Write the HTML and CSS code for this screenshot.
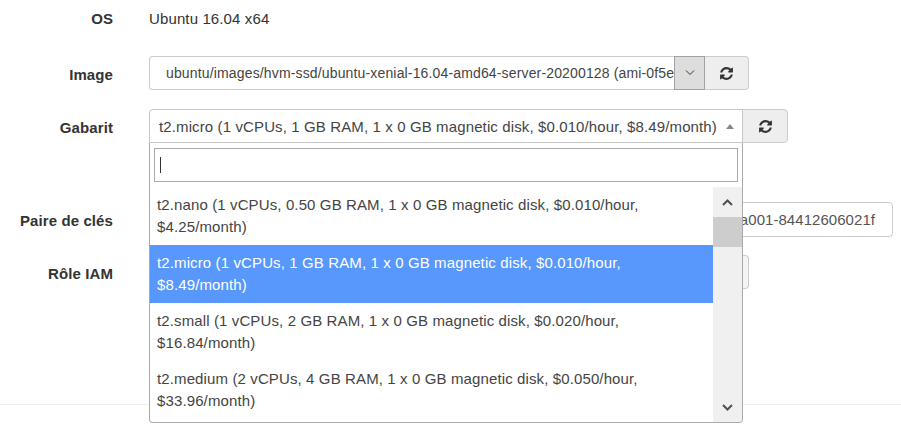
FILE: index.html
```html
<!DOCTYPE html>
<html lang="fr">
<head>
<meta charset="utf-8">
<title>Instance</title>
<link rel="stylesheet" href="styles.css">
</head>
<body>
<form class="form">
  <div class="row row-os">
    <div class="label">OS</div>
    <div class="static">Ubuntu 16.04 x64</div>
  </div>

  <div class="row row-image">
    <label class="label">Image</label>
    <div class="group">
      <div class="native">
        <span class="native-text">ubuntu/images/hvm-ssd/ubuntu-xenial-16.04-amd64-server-20200128 (ami-0f5ea0bd1cbbdb4b7)</span>
        <span class="native-arrow"><svg width="10" height="6" viewBox="0 0 10 6"><path d="M1 .5l4 4 4-4" fill="none" stroke="#333" stroke-width="1"/></svg></span>
      </div>
      <button type="button" class="addon"><svg class="refresh" viewBox="0 0 1792 1792"><path d="M1639 1056q0 5-1 7-64 268-268 434.5t-478 166.5q-146 0-282.5-55t-243.5-157l-129 129q-19 19-45 19t-45-19-19-45v-448q0-26 19-45t45-19h448q26 0 45 19t19 45-19 45l-137 137q71 66 161 102t187 36q134 0 250-65t186-179q11-17 53-117 8-23 30-23h192q13 0 22.5 9.5t9.5 22.5zm25-800v448q0 26-19 45t-45 19h-448q-26 0-45-19t-19-45 19-45l138-138q-148-137-349-137-134 0-250 65t-186 179q-11 17-53 117-8 23-30 23h-199q-13 0-22.5-9.5t-9.5-22.5v-7q65-268 270-434.5t480-166.5q146 0 284 55.5t245 156.5l130-129q19-19 45-19t45 19 19 45z"/></svg></button>
    </div>
  </div>

  <div class="row row-gabarit">
    <label class="label">Gabarit</label>
    <div class="group">
      <div class="s2">
        <div class="s2-selection">
          <span class="s2-text">t2.micro (1 vCPUs, 1 GB RAM, 1 x 0 GB magnetic disk, $0.010/hour, $8.49/month)</span>
          <b class="s2-arrow"></b>
        </div>
        <div class="s2-dropdown">
          <div class="s2-search"><div class="s2-input"><span class="caret"></span></div></div>
          <div class="s2-results">
            <ul class="s2-list">
              <li class="s2-option">t2.nano (1 vCPUs, 0.50 GB RAM, 1 x 0 GB magnetic disk, $0.010/hour, $4.25/month)</li>
              <li class="s2-option is-highlighted">t2.micro (1 vCPUs, 1 GB RAM, 1 x 0 GB magnetic disk, $0.010/hour, $8.49/month)</li>
              <li class="s2-option">t2.small (1 vCPUs, 2 GB RAM, 1 x 0 GB magnetic disk, $0.020/hour, $16.84/month)</li>
              <li class="s2-option">t2.medium (2 vCPUs, 4 GB RAM, 1 x 0 GB magnetic disk, $0.050/hour, $33.96/month)</li>
            </ul>
            <div class="scrollbar">
              <span class="sb-btn"><svg width="11" height="7" viewBox="0 0 11 7"><path d="M1 6l4.5-4.5L10 6" fill="none" stroke="#505050" stroke-width="2"/></svg></span>
              <span class="sb-thumb"></span>
              <span class="sb-track"></span>
              <span class="sb-btn"><svg width="11" height="7" viewBox="0 0 11 7"><path d="M1 1l4.5 4.5L10 1" fill="none" stroke="#505050" stroke-width="2"/></svg></span>
            </div>
          </div>
        </div>
      </div>
      <button type="button" class="addon addon-s2"><svg class="refresh" viewBox="0 0 1792 1792"><path d="M1639 1056q0 5-1 7-64 268-268 434.5t-478 166.5q-146 0-282.5-55t-243.5-157l-129 129q-19 19-45 19t-45-19-19-45v-448q0-26 19-45t45-19h448q26 0 45 19t19 45-19 45l-137 137q71 66 161 102t187 36q134 0 250-65t186-179q11-17 53-117 8-23 30-23h192q13 0 22.5 9.5t9.5 22.5zm25-800v448q0 26-19 45t-45 19h-448q-26 0-45-19t-19-45 19-45l138-138q-148-137-349-137-134 0-250 65t-186 179q-11 17-53 117-8 23-30 23h-199q-13 0-22.5-9.5t-9.5-22.5v-7q65-268 270-434.5t480-166.5q146 0 284 55.5t245 156.5l130-129q19-19 45-19t45 19 19 45z"/></svg></button>
    </div>
  </div>

  <div class="row row-key">
    <label class="label">Paire de clés</label>
    <div class="key"><span>a001-84412606021f</span></div>
  </div>

  <div class="row row-iam">
    <label class="label">Rôle IAM</label>
    <div class="group">
      <div class="native native-plain"><span class="native-text"></span></div>
      <button type="button" class="addon addon-plain"></button>
    </div>
  </div>
</form>
<hr class="divider">
</body>
</html>
```

FILE: styles.css
```css
html, body {
  margin: 0;
  padding: 0;
  background: #fff;
}

body {
  font-family: "Liberation Sans", Arial, sans-serif;
  font-size: 15px;
  letter-spacing: 0.12px;
  color: #333;
  min-height: 427px;
}

.form {
  display: flex;
  flex-direction: column;
  padding-top: 8px;
}

.row {
  display: grid;
  grid-template-columns: 113px auto;
  column-gap: 36px;
  align-items: start;
  justify-content: start;
}

.row-os { margin-bottom: 27px; }
.row-image { margin-bottom: 19px; }
.row-gabarit { margin-bottom: 59px; }
.row-key { margin-bottom: 18px; }

.label {
  text-align: right;
  font-weight: bold;
  padding-top: 9px;
  line-height: 20px;
  letter-spacing: 0.1px;
  color: #333;
}

.row-os .label {
  padding-top: 0;
  line-height: 21px;
}

.static {
  line-height: 21px;
  color: #333;
}

.group {
  display: flex;
  height: 34px;
}

/* native-looking select */
.native {
  display: flex;
  width: 556px;
  height: 34px;
}

.native-text {
  flex: 1;
  min-width: 0;
  box-sizing: border-box;
  height: 34px;
  line-height: 33px;
  border: 1px solid #ccc;
  border-right: 0;
  border-radius: 4px 0 0 4px;
  padding-left: 16px;
  font-size: 14px;
  letter-spacing: 0.15px;
  white-space: nowrap;
  overflow: hidden;
  color: #444;
}

.native-arrow {
  width: 31px;
  height: 34px;
  box-sizing: border-box;
  border: 1px solid #a2a2a2;
  background: #dddddd;
  display: flex;
  align-items: center;
  justify-content: center;
}

.native-plain .native-text {
  border-right: 1px solid #ccc;
}

.addon {
  width: 44px;
  height: 34px;
  box-sizing: border-box;
  margin: 0;
  padding: 0;
  border: 1px solid #ccc;
  border-left: 0;
  border-radius: 0 4px 4px 0;
  background: #eee;
  display: flex;
  align-items: center;
  justify-content: center;
}

.addon-s2 {
  width: 46px;
  margin-left: -1px;
  border-left: 1px solid #ccc;
}

.addon-plain {
  background: #f4f4f4;
}

.refresh {
  width: 15px;
  height: 15px;
  fill: #333;
}

/* select2 */
.s2 {
  position: relative;
  width: 594px;
}

.s2-selection {
  height: 34px;
  box-sizing: border-box;
  border: 1px solid #c6c6c6;
  border-radius: 4px 0 0 0;
  display: flex;
  align-items: center;
  padding: 1px 8px 0 9px;
  color: #444;
  white-space: nowrap;
}

.s2-arrow {
  margin-left: auto;
  width: 0;
  height: 0;
  border-style: solid;
  border-width: 0 4px 5px 4px;
  border-color: transparent transparent #888 transparent;
}

.s2-dropdown {
  position: absolute;
  top: 100%;
  left: 0;
  width: 594px;
  box-sizing: border-box;
  border: 1px solid #aaa;
  border-top: 0;
  border-radius: 0 0 4px 4px;
  background: #fff;
  z-index: 10;
  overflow: hidden;
}

.s2-search {
  padding: 5px 4px 5px;
}

.s2-input {
  height: 34px;
  box-sizing: border-box;
  border: 1px solid #aaa;
  padding-left: 5px;
  display: flex;
  align-items: center;
}

.caret {
  display: block;
  width: 1px;
  height: 16px;
  background: #333;
}

.s2-results {
  display: flex;
  height: 235px;
  overflow: hidden;
}

.s2-list {
  flex: 1;
  margin: 0;
  padding: 0;
  list-style: none;
}

.s2-option {
  padding: 7px 8px 7px 7px;
  line-height: 22px;
  color: #444;
}

.s2-option.is-highlighted {
  background: #5897fb;
  color: #fff;
}

.scrollbar {
  width: 29px;
  flex: none;
  background: #f0f0f0;
  display: flex;
  flex-direction: column;
}

.sb-btn {
  height: 30px;
  flex: none;
  display: flex;
  align-items: center;
  justify-content: center;
}

.sb-thumb {
  height: 30px;
  flex: none;
  background: #cdcdcd;
}

.sb-track {
  flex: 1;
}

/* key pair */
.key {
  width: 744px;
  height: 35px;
  box-sizing: border-box;
  border: 1px solid #ccc;
  border-radius: 4px;
  display: flex;
  align-items: center;
  justify-content: flex-end;
  padding-right: 17px;
  white-space: nowrap;
  overflow: hidden;
  color: #555;
  letter-spacing: 0.05px;
}

.divider {
  border: 0;
  border-top: 1px solid #eee;
  margin: 115px 0 0;
  height: 0;
}
```
